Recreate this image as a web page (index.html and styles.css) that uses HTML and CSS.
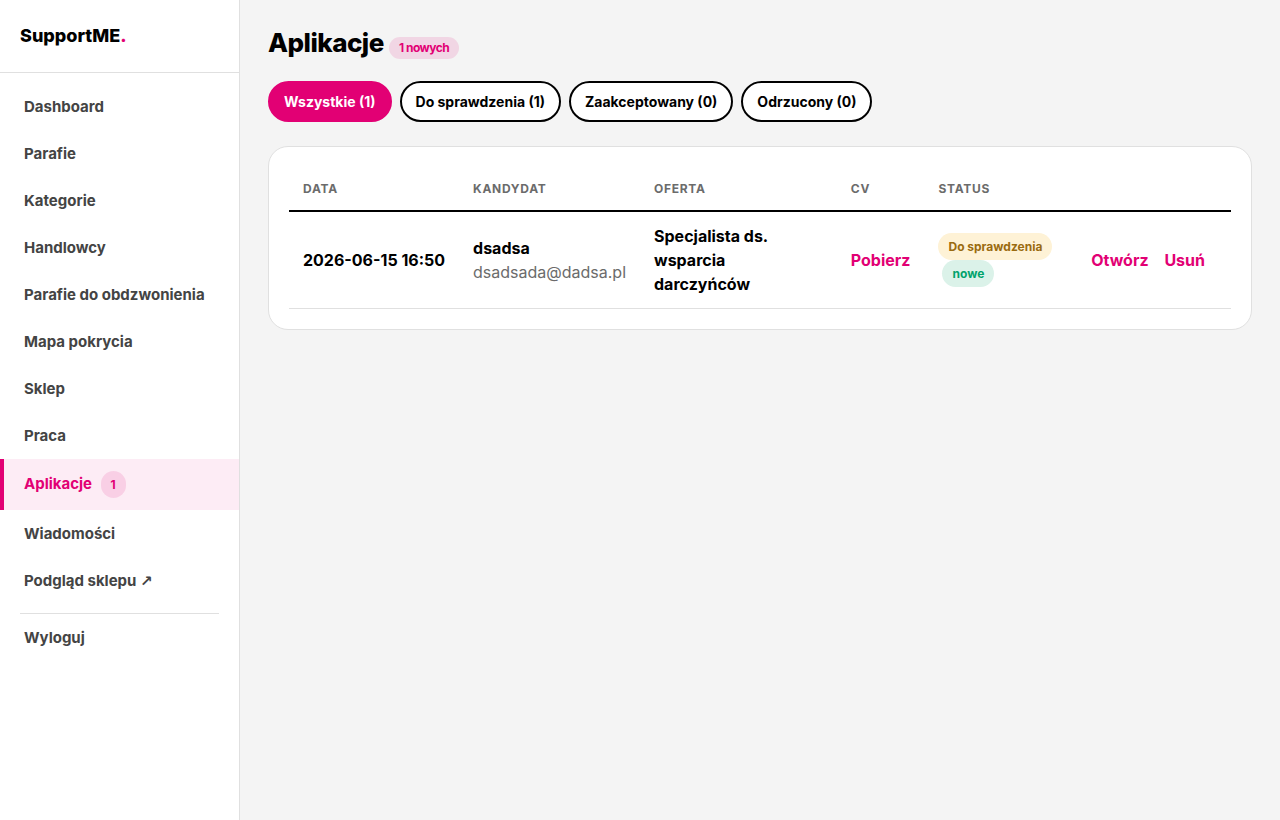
FILE: index.html
```html
<!DOCTYPE html>
<html lang="pl">

<head>
    <meta charset="UTF-8">
    <meta name="viewport" content="width=device-width, initial-scale=1.0">
    <title>Aplikacje - SupportME</title>
    <link rel="stylesheet" href="styles.css">
</head>

<body>
    <div class="layout">
        <aside class="sidebar">
            <div class="sidebar-brand">SupportME<span>.</span></div>
            <nav class="sidebar-nav">
                <a href="#">Dashboard</a>
                <a href="#">Parafie</a>
                <a href="#">Kategorie</a>
                <a href="#">Handlowcy</a>
                <a href="#">Parafie do obdzwonienia</a>
                <a href="#">Mapa pokrycia</a>
                <a href="#">Sklep</a>
                <a href="#">Praca</a>
                <a href="#" class="active">Aplikacje <span class="badge badge-pink badge-nav">1</span></a>
                <a href="#">Wiadomości</a>
                <a href="#">Podgląd sklepu <span class="arrow">↗</span></a>
                <hr>
                <a href="#">Wyloguj</a>
            </nav>
        </aside>

        <main class="main">
            <h1>Aplikacje <span class="badge badge-pink">1 nowych</span></h1>

            <div class="filters">
                <a href="#" class="btn btn-primary">Wszystkie (1)</a>
                <a href="#" class="btn">Do sprawdzenia (1)</a>
                <a href="#" class="btn">Zaakceptowany (0)</a>
                <a href="#" class="btn">Odrzucony (0)</a>
            </div>

            <div class="card">
                <table>
                    <thead>
                        <tr>
                            <th>Data</th>
                            <th>Kandydat</th>
                            <th>Oferta</th>
                            <th>CV</th>
                            <th>Status</th>
                            <th></th>
                        </tr>
                    </thead>
                    <tbody>
                        <tr>
                            <td class="nowrap">2026-06-15 16:50</td>
                            <td>dsadsa<br><span class="muted">dsadsada@dadsa.pl</span></td>
                            <td>Specjalista ds. wsparcia darczyńców</td>
                            <td><a href="#">Pobierz</a></td>
                            <td>
                                <span class="badge badge-yellow">Do sprawdzenia</span>
                                <span class="badge badge-green">nowe</span>
                            </td>
                            <td class="actions">
                                <a href="#">Otwórz</a>
                                <button type="button">Usuń</button>
                            </td>
                        </tr>
                    </tbody>
                </table>
            </div>
        </main>
    </div>
</body>

</html>
```

FILE: styles.css
```css
* {
    box-sizing: border-box;
}

body {
    margin: 0;
    font-family: Inter, "Liberation Sans", sans-serif;
    font-size: 16px;
    line-height: 24px;
    color: #000;
    background: #f4f4f4;
}

a {
    color: #e20074;
    text-decoration: none;
}

.layout {
    display: flex;
    min-height: 100vh;
}

.sidebar {
    width: 240px;
    flex-shrink: 0;
    background: #fff;
    border-right: 1px solid #e0e0e0;
}

.sidebar-brand {
    padding: 22px 20px;
    font-size: 18px;
    line-height: 28px;
    font-weight: 800;
    border-bottom: 1px solid #e0e0e0;
}

.sidebar-brand span {
    color: #e20074;
}

.sidebar-nav {
    padding: 10px 0;
}

.sidebar-nav a {
    display: block;
    padding: 12px 20px;
    border-left: 4px solid transparent;
    font-size: 15px;
    line-height: 23px;
    font-weight: 700;
    color: #444;
}

.sidebar-nav a.active {
    color: #e20074;
    background: #fdecf5;
    border-left-color: #e20074;
}

.sidebar-nav .arrow {
    font-family: "DejaVu Sans", sans-serif;
}

.sidebar-nav hr {
    margin: 8px 20px 0;
    border: none;
    border-top: 1px solid #e0e0e0;
}

.main {
    flex: 1;
    min-width: 0;
    padding: 28px;
}

h1 {
    margin: 0 0 22px;
    font-size: 26px;
    line-height: 30px;
    font-weight: 800;
    letter-spacing: -0.02em;
}

.badge {
    display: inline-block;
    padding: 4px 10px;
    border-radius: 999px;
    font-size: 12px;
    line-height: 19px;
    font-weight: 700;
}

h1 .badge {
    line-height: 14px;
}

.badge-pink {
    color: #e20074;
    background: rgba(226, 0, 116, 0.12);
}

.badge-nav {
    margin-left: 5px;
}

.badge-yellow {
    color: #9a6b10;
    background: #fef2d6;
}

.badge-green {
    margin-left: 4px;
    color: #00a36c;
    background: #dbf2e9;
}

.filters {
    display: flex;
    flex-wrap: wrap;
    gap: 8px;
    margin-bottom: 24px;
}

.btn {
    padding: 8px 14px;
    border: 2px solid #000;
    border-radius: 999px;
    font-size: 14px;
    line-height: 21px;
    font-weight: 700;
    color: #000;
    background: #fff;
}

.btn-primary {
    color: #fff;
    background: #e20074;
    border-color: #e20074;
}

.card {
    padding: 20px;
    background: #fff;
    border: 1px solid #e0e0e0;
    border-radius: 20px;
}

table {
    width: 100%;
    border-collapse: collapse;
}

th,
td {
    padding: 12px 14px;
    text-align: left;
    vertical-align: middle;
}

th {
    font-size: 12px;
    line-height: 19px;
    font-weight: 700;
    letter-spacing: 0.06em;
    text-transform: uppercase;
    color: #6b6b6b;
    border-bottom: 2px solid #000;
}

td {
    font-weight: 700;
    border-bottom: 1px solid #e0e0e0;
}

.muted {
    font-weight: 400;
    color: #6b6b6b;
}

.nowrap,
.actions {
    white-space: nowrap;
}

.actions a,
.actions button {
    margin: 0 12px 0 0;
}

.actions button {
    padding: 0;
    border: none;
    background: none;
    font: inherit;
    color: #e20074;
    cursor: pointer;
}
```
